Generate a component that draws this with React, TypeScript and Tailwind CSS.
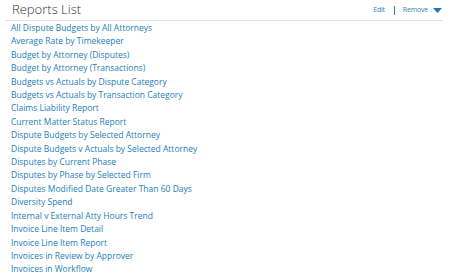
const reports = [
  'All Dispute Budgets by All Attorneys',
  'Average Rate by Timekeeper',
  'Budget by Attorney (Disputes)',
  'Budget by Attorney (Transactions)',
  'Budgets vs Actuals by Dispute Category',
  'Budgets vs Actuals by Transaction Category',
  'Claims Liability Report',
  'Current Matter Status Report',
  'Dispute Budgets by Selected Attorney',
  'Dispute Budgets v Actuals by Selected Attorney',
  'Disputes by Current Phase',
  'Disputes by Phase by Selected Firm',
  'Disputes Modified Date Greater Than 60 Days',
  'Diversity Spend',
  'Internal v External Atty Hours Trend',
  'Invoice Line Item Detail',
  'Invoice Line Item Report',
  'Invoices in Review by Approver',
  'Invoices in Workflow',
];

export default function App() {
  return (
    <div className="w-[452px] h-[278px] bg-white overflow-hidden font-['Open_Sans',sans-serif]">
      <div className="ml-[5px] mr-[9px] h-[21px] flex items-end justify-between border-b border-[#e3e3e3]">
        <h2 className="pl-[7px] pb-[3px] text-[13px] leading-[16px] font-light text-[#333]">Reports List</h2>
        <div className="flex items-center pb-[5px] text-[7px] leading-[10px] tracking-[-0.2px] text-[#3a7fae]">
          <span>Edit</span>
          <span className="ml-[9px] mr-[8px] w-px h-[9px] bg-[#2b78b0]" />
          <span>Remove</span>
          <svg className="ml-[5px] mr-[1px]" width="9" height="5" viewBox="0 0 9 5">
            <path d="M0 0h9L4.5 5z" fill="#2277b3" />
          </svg>
        </div>
      </div>
      <ul className="pl-[11px]">
        {reports.map((r) => (
          <li key={r} className="text-[8.5px] leading-[13.4px] text-[#2580b9]">
            {r}
          </li>
        ))}
      </ul>
    </div>
  );
}
